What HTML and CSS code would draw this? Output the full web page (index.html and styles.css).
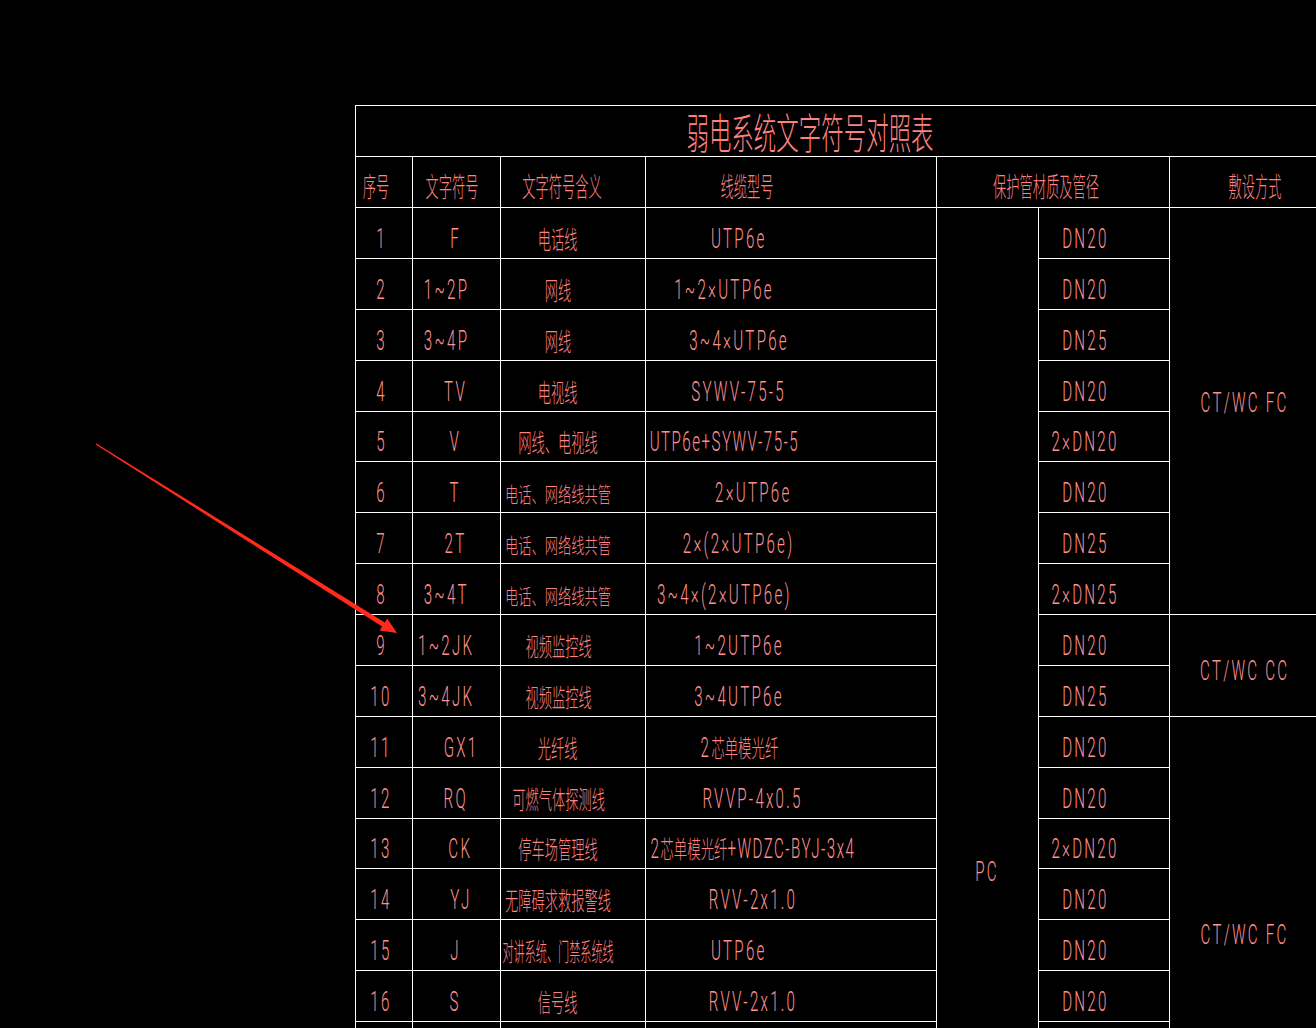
FILE: index.html
```html
<!DOCTYPE html>
<html lang="zh-CN">
  <head>
    <meta charset="UTF-8" />
    <title>弱电系统文字符号对照表</title>
    <link rel="stylesheet" href="styles.css">
  </head>
  <body>
    <main class="page">
      <section class="sheet">
        <div class="title"><span class="t">弱电系统文字符号对照表</span></div>

        <div class="hd h1"><span class="t">序号</span></div>
        <div class="hd h2"><span class="t">文字符号</span></div>
        <div class="hd h3"><span class="t">文字符号含义</span></div>
        <div class="hd h4"><span class="t">线缆型号</span></div>
        <div class="hd h5"><span class="t">保护管材质及管径</span></div>
        <div class="hd h6"><span class="t">敷设方式</span></div>

        <div class="pc"><span class="t">PC</span></div>
        <div class="lay g1"><span class="t">CT/WC FC</span></div>
        <div class="lay g2"><span class="t">CT/WC CC</span></div>
        <div class="lay g3"><span class="t">CT/WC FC</span></div>

        <div class="k1"><span class="t">1</span></div>
        <div class="k2"><span class="t">F</span></div>
        <div class="k3"><span class="t cn">电话线</span></div>
        <div class="k4"><span class="t">UTP6e</span></div>
        <div class="k6"><span class="t">DN20</span></div>

        <div class="k1"><span class="t">2</span></div>
        <div class="k2 sl"><span class="t">1~2P</span></div>
        <div class="k3"><span class="t cn">网线</span></div>
        <div class="k4 sl"><span class="t">1~2×UTP6e</span></div>
        <div class="k6"><span class="t">DN20</span></div>

        <div class="k1"><span class="t">3</span></div>
        <div class="k2 sl"><span class="t">3~4P</span></div>
        <div class="k3"><span class="t cn">网线</span></div>
        <div class="k4"><span class="t">3~4×UTP6e</span></div>
        <div class="k6"><span class="t">DN25</span></div>

        <div class="k1"><span class="t">4</span></div>
        <div class="k2"><span class="t">TV</span></div>
        <div class="k3"><span class="t cn">电视线</span></div>
        <div class="k4"><span class="t">SYWV-75-5</span></div>
        <div class="k6"><span class="t">DN20</span></div>

        <div class="k1"><span class="t">5</span></div>
        <div class="k2"><span class="t">V</span></div>
        <div class="k3"><span class="t cn">网线、电视线</span></div>
        <div class="k4 sl"><span class="t narrow">UTP6e+SYWV-75-5</span></div>
        <div class="k6"><span class="t">2×DN20</span></div>

        <div class="k1"><span class="t">6</span></div>
        <div class="k2"><span class="t">T</span></div>
        <div class="k3"><span class="t cn sm">电话、网络线共管</span></div>
        <div class="k4 sr"><span class="t">2×UTP6e</span></div>
        <div class="k6"><span class="t">DN20</span></div>

        <div class="k1"><span class="t">7</span></div>
        <div class="k2"><span class="t">2T</span></div>
        <div class="k3"><span class="t cn sm">电话、网络线共管</span></div>
        <div class="k4"><span class="t">2×(2×UTP6e)</span></div>
        <div class="k6"><span class="t">DN25</span></div>

        <div class="k1"><span class="t">8</span></div>
        <div class="k2 sl"><span class="t">3~4T</span></div>
        <div class="k3"><span class="t cn sm">电话、网络线共管</span></div>
        <div class="k4 sl"><span class="t">3~4×(2×UTP6e)</span></div>
        <div class="k6"><span class="t">2×DN25</span></div>

        <div class="k1"><span class="t">9</span></div>
        <div class="k2 sl"><span class="t">1~2JK</span></div>
        <div class="k3"><span class="t cn">视频监控线</span></div>
        <div class="k4"><span class="t">1~2UTP6e</span></div>
        <div class="k6"><span class="t">DN20</span></div>

        <div class="k1"><span class="t">10</span></div>
        <div class="k2 sl"><span class="t">3~4JK</span></div>
        <div class="k3"><span class="t cn">视频监控线</span></div>
        <div class="k4"><span class="t">3~4UTP6e</span></div>
        <div class="k6"><span class="t">DN25</span></div>

        <div class="k1"><span class="t">11</span></div>
        <div class="k2 sr"><span class="t">GX1</span></div>
        <div class="k3"><span class="t cn">光纤线</span></div>
        <div class="k4"><span class="t">2<span class="cn">芯单模光纤</span></span></div>
        <div class="k6"><span class="t">DN20</span></div>

        <div class="k1"><span class="t">12</span></div>
        <div class="k2"><span class="t">RQ</span></div>
        <div class="k3"><span class="t cn">可燃气体探测线</span></div>
        <div class="k4 sr"><span class="t">RVVP-4x0.5</span></div>
        <div class="k6"><span class="t">DN20</span></div>

        <div class="k1"><span class="t">13</span></div>
        <div class="k2 sr"><span class="t">CK</span></div>
        <div class="k3"><span class="t cn">停车场管理线</span></div>
        <div class="k4 sr"><span class="t narrow">2<span class="cn">芯单模光纤</span>+WDZC-BYJ-3x4</span></div>
        <div class="k6"><span class="t">2×DN20</span></div>

        <div class="k1"><span class="t">14</span></div>
        <div class="k2 sr"><span class="t">YJ</span></div>
        <div class="k3"><span class="t cn">无障碍求救报警线</span></div>
        <div class="k4 sr"><span class="t">RVV-2x1.0</span></div>
        <div class="k6"><span class="t">DN20</span></div>

        <div class="k1"><span class="t">15</span></div>
        <div class="k2"><span class="t">J</span></div>
        <div class="k3"><span class="t cn tight">对讲系统、门禁系统线</span></div>
        <div class="k4"><span class="t">UTP6e</span></div>
        <div class="k6"><span class="t">DN20</span></div>

        <div class="k1"><span class="t">16</span></div>
        <div class="k2"><span class="t">S</span></div>
        <div class="k3"><span class="t cn">信号线</span></div>
        <div class="k4 sr"><span class="t">RVV-2x1.0</span></div>
        <div class="k6"><span class="t">DN20</span></div>

        <div class="k1"></div>
        <div class="k2"></div>
        <div class="k3"></div>
        <div class="k4"></div>
        <div class="k6"></div>
      </section>
    </main>

    <svg class="arrow" width="1316" height="1028" viewBox="0 0 1316 1028">
      <polygon points="96.4,443.4 384.8,622.4 387.2,618.6 397,633 379.7,630.4 382.1,626.6 95.6,444.6" />
    </svg>
  </body>
</html>
```

FILE: styles.css
```css
html,
body {
  margin: 0;
  padding: 0;
  background-color: #000;
  overflow: hidden;
}

body {
  position: relative;
  width: 1316px;
  height: 1028px;
}

.page {
  padding: 105px 0 0 355px;
}

/* the white lines are the 1px gaps of the grid */
.sheet {
  display: grid;
  width: max-content;
  grid-template-columns: 56px 87px 144px 290px 101px 130px 150px;
  grid-template-rows:
    50px 50px
    repeat(4, 50px) 49px repeat(7, 50px) 49px repeat(4, 50px);
  gap: 1px;
  padding: 1px;
  background-color: #fff;
}

.sheet > div {
  display: flex;
  align-items: center;
  justify-content: center;
  box-sizing: border-box;
  padding-top: 12px;
  background-color: #000;
  color: #ff8080;
}

.t {
  display: inline-block;
  white-space: nowrap;
  transform: scaleX(0.56);
  font-family: Roboto, "Noto Sans CJK SC", sans-serif;
  font-weight: 300;
  font-size: 27px;
  line-height: 1;
  letter-spacing: 4px;
  color: #ff9090;
}

.t.narrow {
  letter-spacing: 2.6px;
}

.cn,
.t.cn {
  font-family: "Noto Sans CJK SC", sans-serif;
  font-weight: 200;
  font-size: 24px;
  letter-spacing: 0;
  color: #ff8080;
}

.t.cn {
  font-size: 25px;
  transform: translateY(-1px) scaleX(0.53);
}

.t.sm {
  font-size: 21px;
  transform: scaleX(0.63);
}

.t.tight {
  transform: translateY(-1px) scaleX(0.445);
}

/* title */
.sheet > .title {
  grid-column: 1 / -1;
  padding: 0 55px 0 0;
}

.title .t {
  font-family: "Noto Sans CJK SC", sans-serif;
  font-weight: 200;
  font-size: 42px;
  letter-spacing: 0;
  color: #ff8080;
  transform: scaleX(0.535);
}

/* header row */
.sheet > .hd {
  padding-top: 6px;
}

.hd .t {
  font-family: "Noto Sans CJK SC", sans-serif;
  font-weight: 200;
  font-size: 27px;
  letter-spacing: 0;
  color: #ff8080;
  transform: scaleX(0.49);
}

.sheet > .h1 { padding-right: 16px; }
.sheet > .h2 { padding-right: 9px; }
.sheet > .h3 { padding-right: 23px; }
.sheet > .h4 { padding-right: 88px; }
.sheet > .h5 { grid-column: span 2; padding-right: 15px; }
.sheet > .h6 { padding-left: 20px; }

/* body columns */
.sheet > .k1 { padding-right: 6px; }
.sheet > .k2 { padding-right: 2px; }
.sheet > .k3 { padding-right: 30px; }
.sheet > .k4 { padding-right: 104px; }
.sheet > .k6 { padding-right: 38px; }

.k2.sl > .t { margin-right: 18px; }
.k2.sr > .t { margin-left: 10px; }
.k4.sl > .t { margin-right: 30px; }
.k4.sr > .t { margin-left: 28px; }

.sheet > .pc {
  grid-column: 5;
  grid-row: 3 / 20;
  align-items: flex-start;
  padding-top: 651px;
}

.sheet > .lay {
  grid-column: 7;
}

.sheet > .g1 {
  grid-row: 3 / 11;
  padding: 0 0 15px;
}

.sheet > .g2 {
  grid-row: 11 / 13;
}

.sheet > .g3 {
  grid-row: 13 / 20;
  align-items: flex-start;
  padding-top: 205px;
}

.arrow {
  position: absolute;
  left: 0;
  top: 0;
  pointer-events: none;
}

.arrow polygon {
  fill: #ff2a1a;
}
```
